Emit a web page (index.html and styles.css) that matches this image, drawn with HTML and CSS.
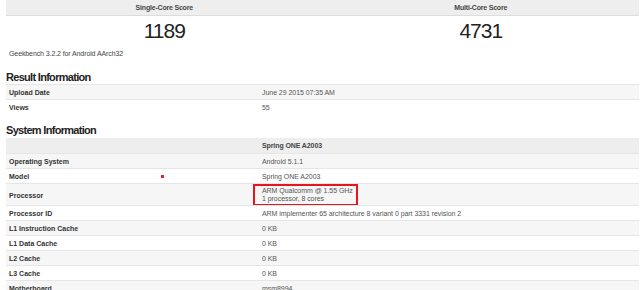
FILE: index.html
```html
<!DOCTYPE html>
<html>
<head>
<meta charset="utf-8">
<link rel="stylesheet" href="styles.css">
</head>
<body>
<div class="page">
  <div class="scores">
    <div class="score-col">
      <div class="score-head">Single-Core Score</div>
      <div class="score-val">1189</div>
    </div>
    <div class="score-col">
      <div class="score-head">Multi-Core Score</div>
      <div class="score-val">4731</div>
    </div>
  </div>
  <div class="version">Geekbench 3.2.2 for Android AArch32</div>

  <h2 class="section">Result Information</h2>
  <div class="table">
    <div class="row alt"><div class="k">Upload Date</div><div class="v">June 29 2015 07:35 AM</div></div>
    <div class="row"><div class="k">Views</div><div class="v">55</div></div>
  </div>

  <h2 class="section sys">System Information</h2>
  <div class="table">
    <div class="row head"><div class="k"></div><div class="v">Spring ONE A2003</div></div>
    <div class="row alt"><div class="k">Operating System</div><div class="v">Android 5.1.1</div></div>
    <div class="row"><div class="k mk">Model<span class="dot"></span></div><div class="v">Spring ONE A2003</div></div>
    <div class="row alt tall"><div class="k">Processor</div><div class="v"><div class="hl">ARM Qualcomm @ 1.55 GHz<br>1 processor, 8 cores</div></div></div>
    <div class="row"><div class="k">Processor ID</div><div class="v">ARM implementer 65 architecture 8 variant 0 part 3331 revision 2</div></div>
    <div class="row alt"><div class="k">L1 Instruction Cache</div><div class="v">0 KB</div></div>
    <div class="row"><div class="k">L1 Data Cache</div><div class="v">0 KB</div></div>
    <div class="row alt"><div class="k">L2 Cache</div><div class="v">0 KB</div></div>
    <div class="row"><div class="k">L3 Cache</div><div class="v">0 KB</div></div>
    <div class="row alt"><div class="k">Motherboard</div><div class="v">msm8994</div></div>
  </div>
</div>
</body>
</html>
```

FILE: styles.css
```css
html, body {
  margin: 0;
  padding: 0;
  background: #fff;
}
body {
  font-family: "Liberation Sans", Arial, sans-serif;
  color: #333;
  overflow: hidden;
}
.page {
  padding: 0 1px 0 6px;
}
.scores {
  display: flex;
}
.score-col {
  flex: 1;
  text-align: center;
}
.score-head {
  height: 15px;
  line-height: 15px;
  background: #eeeeee;
  border-bottom: 1px solid #dddddd;
  font-size: 7px;
  font-weight: bold;
  letter-spacing: -0.2px;
  color: #444;
}
.score-val {
  height: 30px;
  line-height: 30px;
  font-size: 21px;
  letter-spacing: -1px;
  color: #222;
}
.version {
  height: 15px;
  line-height: 15px;
  padding-left: 3px;
  font-size: 7px;
  letter-spacing: -0.1px;
  color: #444;
}
.section {
  margin: 0;
  height: 23px;
  line-height: 14px;
  padding-top: 9px;
  box-sizing: border-box;
  font-size: 11px;
  font-weight: bold;
  letter-spacing: -0.7px;
  color: #222;
}
.sys {
  height: 24px;
  padding-top: 9px;
}
.table {
  display: flex;
  flex-direction: column;
}
.row {
  display: grid;
  grid-template-columns: 250px 1fr;
  height: 15px;
  border-top: 1px solid #e6e6e6;
  box-sizing: border-box;
  font-size: 7px;
  background: #fff;
}
.row.alt {
  background: #f6f6f6;
}
.row.head {
  background: #eeeeee;
  border-top: none;
}
.row.head .v {
  font-weight: bold;
  color: #444;
  letter-spacing: -0.1px;
}
.row.tall {
  height: 22px;
}
.k {
  padding-left: 3px;
  display: flex;
  align-items: center;
  font-weight: bold;
  letter-spacing: 0;
  color: #333;
}
.v {
  padding-left: 6px;
  display: flex;
  align-items: center;
  letter-spacing: -0.05px;
  color: #555;
}
.mk {
  position: relative;
}
.dot {
  position: absolute;
  left: 155px;
  top: 6px;
  width: 3px;
  height: 3px;
  background: #e0262b;
}
.hl {
  margin-left: -9px;
  padding: 0 0 0 7px;
  width: 94px;
  height: 18px;
  border: 2px solid #e5161c;
  line-height: 8px;
  display: flex;
  flex-direction: column;
  justify-content: center;
}
```
